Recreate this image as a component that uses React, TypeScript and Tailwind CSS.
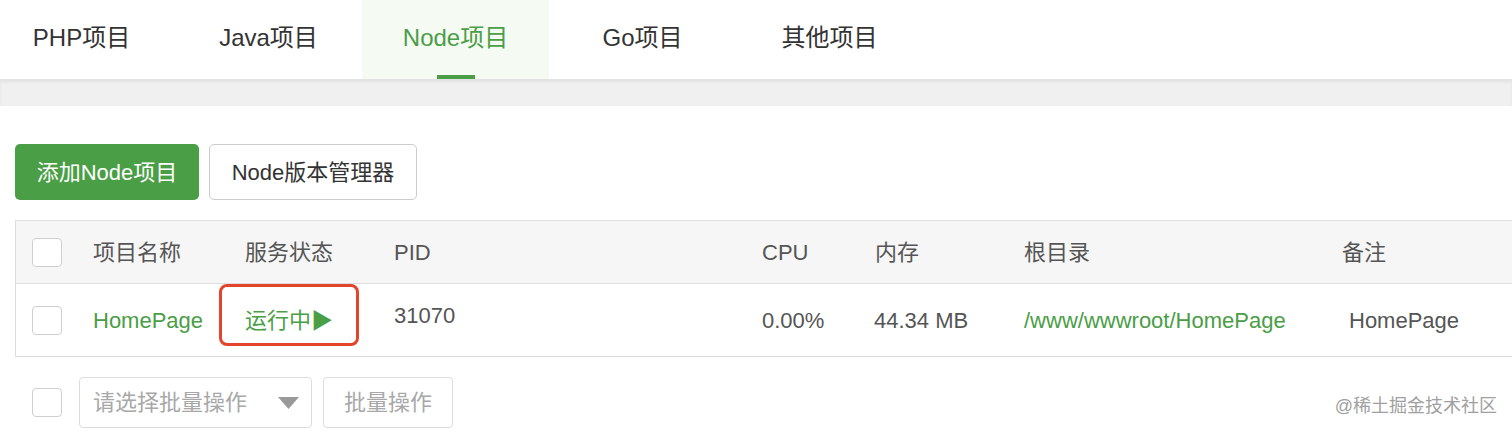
import React from "react";

const GREEN = "text-[#4a9e46]";

function Checkbox() {
  return <div className="w-[30px] h-[29px] rounded-[4px] border border-[#cfcfcf] bg-white" />;
}

export default function App() {
  const tabs = ["PHP项目", "Java项目", "Node项目", "Go项目", "其他项目"];
  return (
    <div
      className="relative w-[1512px] h-[431px] overflow-hidden bg-white"
      style={{ fontFamily: '"Liberation Sans", "Noto Sans CJK SC", sans-serif' }}
    >
      {/* Tab bar */}
      <div className="h-[79px] flex ml-[-12px] bg-white">
        {tabs.map((t, i) => (
          <div
            key={t}
            className={
              "w-[187px] h-full flex flex-col items-center " +
              (i === 2 ? "bg-[#f5faf3]" : "")
            }
          >
            <div
              className={
                "flex-1 flex items-center text-[24px] " +
                (i === 2 ? "text-[#4a9e46]" : "text-[#333333]")
              }
            >
              {t}
            </div>
            <div className={"w-[38px] h-[4px] " + (i === 2 ? "bg-[#4a9e46]" : "")} />
          </div>
        ))}
      </div>
      <div className="h-[27px] bg-[#f0f0f0] shadow-[inset_0_3px_3px_rgba(0,0,0,0.06)]" />

      <div className="pl-[15px]">
        {/* Buttons */}
        <div className="mt-[38px] flex gap-[10px]">
          <div className="w-[184px] h-[56px] rounded-[5px] bg-[#4a9e46] text-white text-[22px] flex items-center justify-center">
            添加Node项目
          </div>
          <div className="w-[208px] h-[56px] rounded-[5px] border border-[#cccccc] bg-white text-[#333333] text-[22px] flex items-center justify-center">
            Node版本管理器
          </div>
        </div>

        {/* Table */}
        <div className="mt-[20px] w-[1540px] border-l border-t border-b border-[#dddddd] text-[22px]">
          <div className="h-[63px] bg-[#f6f6f6] border-b border-[#dddddd] grid grid-cols-[77px_152px_149px_368px_113px_149px_318px_1fr] items-center text-[#555555]">
            <div className="pl-[16px] flex items-center">
              <Checkbox />
            </div>
            <div>项目名称</div>
            <div>服务状态</div>
            <div>PID</div>
            <div>CPU</div>
            <div>内存</div>
            <div>根目录</div>
            <div>备注</div>
          </div>
          <div className="h-[72px] grid grid-cols-[77px_152px_149px_368px_113px_149px_318px_1fr] items-center text-[#555555]">
            <div className="pl-[16px] flex items-center">
              <Checkbox />
            </div>
            <div className={GREEN}>HomePage</div>
            <div className="relative">
              <div className="absolute left-[-26px] top-[-20px] w-[140px] h-[62px] rounded-[8px] border-[3px] border-[#e2452b]" />
              <span className={GREEN}>运行中▶</span>
            </div>
            <div className="mb-[10px]">31070</div>
            <div>0.00%</div>
            <div className="ml-[-1px]">44.34 MB</div>
            <div className={GREEN}>/www/wwwroot/HomePage</div>
            <div className="pl-[7px]">HomePage</div>
          </div>
        </div>

        {/* Bulk actions */}
        <div className="mt-[20px] flex items-center">
          <div className="ml-[17px]">
            <Checkbox />
          </div>
          <div className="ml-[17px] w-[233px] h-[51px] rounded-[4px] border border-[#dddddd] flex items-center pl-[13px] pr-[12px] text-[22px] text-[#a8a8a8]">
            <span className="flex-1">请选择批量操作</span>
            <svg width="21" height="12" viewBox="0 0 21 12">
              <polygon points="0,0 21,0 10.5,12" fill="#9a9a9a" />
            </svg>
          </div>
          <div className="ml-[11px] w-[130px] h-[51px] rounded-[4px] border border-[#dddddd] flex items-center justify-center text-[22px] text-[#a8a8a8]">
            批量操作
          </div>
        </div>
      </div>

      <div className="absolute right-[15px] top-[393px] text-[18px] text-[#a0a0a0]">
        @稀土掘金技术社区
      </div>
    </div>
  );
}
